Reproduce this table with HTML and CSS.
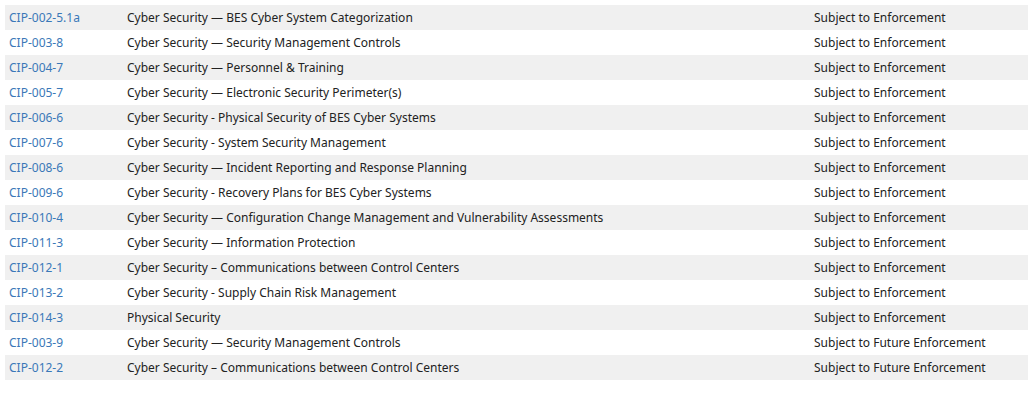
FILE: index.html
```html
<!DOCTYPE html>
<html>
<head>
<meta charset="utf-8">
<link rel="stylesheet" href="styles.css">
</head>
<body>
<table class="stds">
<tbody>
<tr><td class="c1"><a href="#">CIP-002-5.1a</a></td><td class="c2">Cyber Security — BES Cyber System Categorization</td><td class="c3">Subject to Enforcement</td></tr>
<tr><td class="c1"><a href="#">CIP-003-8</a></td><td class="c2">Cyber Security — Security Management Controls</td><td class="c3">Subject to Enforcement</td></tr>
<tr><td class="c1"><a href="#">CIP-004-7</a></td><td class="c2">Cyber Security — Personnel &amp; Training</td><td class="c3">Subject to Enforcement</td></tr>
<tr><td class="c1"><a href="#">CIP-005-7</a></td><td class="c2">Cyber Security — Electronic Security Perimeter(s)</td><td class="c3">Subject to Enforcement</td></tr>
<tr><td class="c1"><a href="#">CIP-006-6</a></td><td class="c2">Cyber Security - Physical Security of BES Cyber Systems</td><td class="c3">Subject to Enforcement</td></tr>
<tr><td class="c1"><a href="#">CIP-007-6</a></td><td class="c2">Cyber Security - System Security Management</td><td class="c3">Subject to Enforcement</td></tr>
<tr><td class="c1"><a href="#">CIP-008-6</a></td><td class="c2">Cyber Security — Incident Reporting and Response Planning</td><td class="c3">Subject to Enforcement</td></tr>
<tr><td class="c1"><a href="#">CIP-009-6</a></td><td class="c2">Cyber Security - Recovery Plans for BES Cyber Systems</td><td class="c3">Subject to Enforcement</td></tr>
<tr><td class="c1"><a href="#">CIP-010-4</a></td><td class="c2">Cyber Security — Configuration Change Management and Vulnerability Assessments</td><td class="c3">Subject to Enforcement</td></tr>
<tr><td class="c1"><a href="#">CIP-011-3</a></td><td class="c2">Cyber Security — Information Protection</td><td class="c3">Subject to Enforcement</td></tr>
<tr><td class="c1"><a href="#">CIP-012-1</a></td><td class="c2">Cyber Security – Communications between Control Centers</td><td class="c3">Subject to Enforcement</td></tr>
<tr><td class="c1"><a href="#">CIP-013-2</a></td><td class="c2">Cyber Security - Supply Chain Risk Management</td><td class="c3">Subject to Enforcement</td></tr>
<tr><td class="c1"><a href="#">CIP-014-3</a></td><td class="c2">Physical Security</td><td class="c3">Subject to Enforcement</td></tr>
<tr><td class="c1"><a href="#">CIP-003-9</a></td><td class="c2">Cyber Security — Security Management Controls</td><td class="c3">Subject to Future Enforcement</td></tr>
<tr><td class="c1"><a href="#">CIP-012-2</a></td><td class="c2">Cyber Security – Communications between Control Centers</td><td class="c3">Subject to Future Enforcement</td></tr>
</tbody>
</table>
</body>
</html>
```
FILE: styles.css
```css
html, body {
  margin: 0;
  padding: 0;
  background: #ffffff;
}
body {
  padding: 5px;
  font-family: "Noto Sans", "Open Sans", sans-serif;
  font-size: 12px;
  color: #222222;
}
.stds {
  border-collapse: collapse;
  width: 1023px;
  table-layout: fixed;
}
.stds td {
  height: 25px;
  padding: 0 4px;
  box-sizing: border-box;
  vertical-align: middle;
  white-space: nowrap;
}
.stds tr:nth-child(odd) td {
  background: #f0f0f0;
}
.c1 { width: 118px; }
.c2 { width: 687px; }
.c3 { width: auto; }
.stds a {
  color: #3a78b8;
  text-decoration: none;
}
```
